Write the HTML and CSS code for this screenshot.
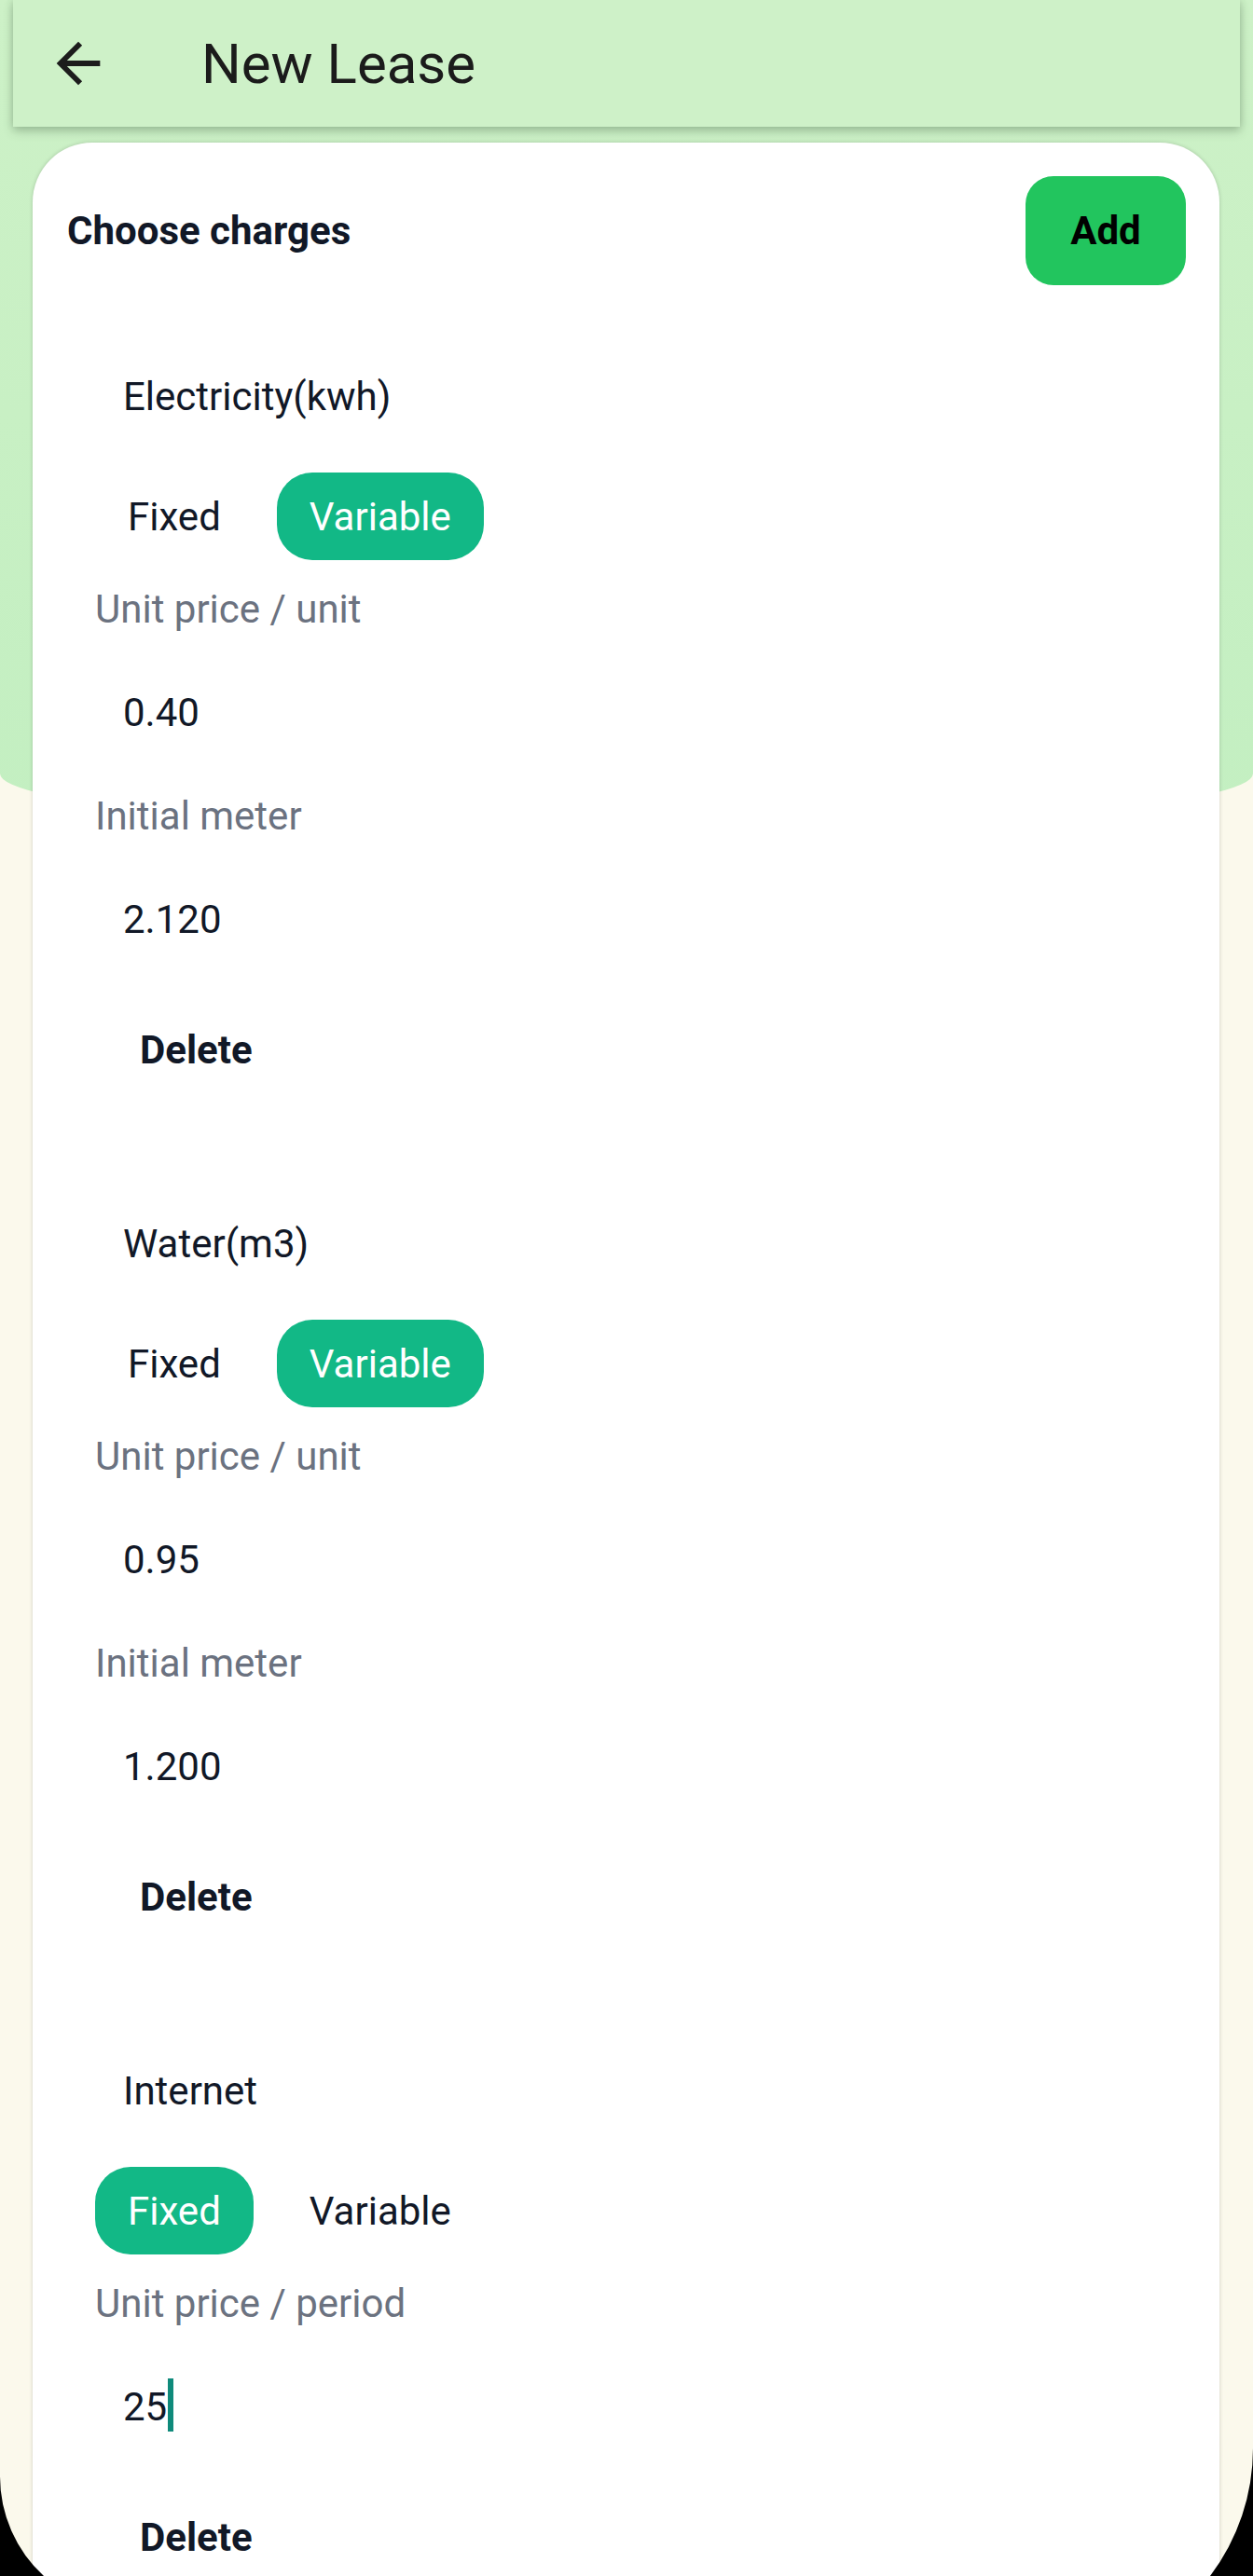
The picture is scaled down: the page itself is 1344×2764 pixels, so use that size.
FILE: index.html
```html
<!DOCTYPE html>
<html lang="en">
<head>
<meta charset="utf-8">
<title>New Lease</title>
<link rel="stylesheet" href="styles.css">
</head>
<body>
<div class="screen">
  <header class="appbar">
    <button class="back" aria-label="Back">
      <svg viewBox="0 0 24 24" width="70" height="70"><path d="M20 11H7.83l5.59-5.59L12 4l-8 8 8 8 1.41-1.41L7.83 13H20v-2z" fill="#1c1c1c"/></svg>
    </button>
    <h1 class="appbar-title">New Lease</h1>
  </header>

  <main class="card">
    <div class="card-head">
      <h2 class="card-title">Choose charges</h2>
      <button class="add-btn">Add</button>
    </div>

    <section class="charge first">
      <div class="title-row">Electricity(kwh)</div>
      <div class="toggle-row">
        <span class="toggle">Fixed</span>
        <span class="toggle active">Variable</span>
      </div>
      <div class="field-label">Unit price / unit</div>
      <div class="field-value">0.40</div>
      <div class="field-label next">Initial meter</div>
      <div class="field-value">2.120</div>
      <div class="delete-row">Delete</div>
    </section>

    <section class="charge">
      <div class="title-row">Water(m3)</div>
      <div class="toggle-row">
        <span class="toggle">Fixed</span>
        <span class="toggle active">Variable</span>
      </div>
      <div class="field-label">Unit price / unit</div>
      <div class="field-value">0.95</div>
      <div class="field-label next">Initial meter</div>
      <div class="field-value">1.200</div>
      <div class="delete-row">Delete</div>
    </section>

    <section class="charge">
      <div class="title-row">Internet</div>
      <div class="toggle-row">
        <span class="toggle active">Fixed</span>
        <span class="toggle">Variable</span>
      </div>
      <div class="field-label">Unit price / period</div>
      <div class="field-value">25<span class="caret"></span></div>
      <div class="delete-row">Delete</div>
    </section>
  </main>

  <svg class="corners" viewBox="0 0 1344 2764" width="1344" height="2764">
    <path d="M0 2657 A145 145 0 0 0 47 2764 L0 2764 Z" fill="#000"/>
    <path d="M1344 2627 A227 227 0 0 1 1298 2764 L1344 2764 Z" fill="#000"/>
  </svg>
</div>
</body>
</html>
```
FILE: styles.css
```css
* { box-sizing: border-box; }
html, body { margin: 0; padding: 0; }
body {
  width: 1344px;
  height: 2764px;
  overflow: hidden;
  font-family: Roboto, "Noto Sans", "Liberation Sans", sans-serif;
  background: #fbf9ec;
}
.screen {
  position: relative;
  width: 1344px;
  height: 2764px;
  overflow: hidden;
  background: #fbf9ec;
}
.screen::before {
  content: "";
  position: absolute;
  left: 0;
  top: 0;
  width: 1344px;
  height: 890px;
  background: linear-gradient(180deg, #cdf1c7 0%, #c3efc1 100%);
  border-radius: 0 0 50% 50% / 0 0 60px 60px;
  z-index: 0;
}
.appbar {
  position: relative;
  z-index: 2;
  margin: 0 14px;
  height: 136px;
  background: #cef1c8;
  display: flex;
  align-items: center;
  box-shadow: 0 5px 10px rgba(60, 90, 60, 0.28), 0 0 8px rgba(60, 90, 60, 0.2);
}
.back {
  border: 0;
  background: none;
  padding: 0;
  margin-left: 35px;
  width: 70px;
  height: 70px;
  display: flex;
}
.appbar-title {
  margin: 0 0 0 97px;
  font-size: 60px;
  font-weight: 400;
  color: #1b1b1b;
  letter-spacing: 0;
}
.card {
  position: relative;
  z-index: 1;
  margin: 17px 0 0 35px;
  width: 1273px;
  height: 2700px;
  background: #fff;
  border-radius: 64px 64px 0 0;
  box-shadow: 0 0 4px rgba(0, 0, 0, 0.18);
  padding: 36px 36px 0 37px;
  color: #111827;
}
.card-head {
  display: flex;
  justify-content: space-between;
  align-items: center;
  height: 117px;
}
.card-title {
  margin: 0;
  font-size: 42px;
  font-weight: 700;
  color: #111827;
}
.add-btn {
  width: 172px;
  height: 117px;
  border: 0;
  border-radius: 30px;
  background: #22c55e;
  color: #000;
  font-family: inherit;
  font-size: 42px;
  font-weight: 700;
}
.charge {
  padding-left: 30px;
  margin-top: 108px;
  font-size: 42px;
}
.charge.first { margin-top: 69px; }
.title-row {
  height: 100px;
  display: flex;
  align-items: center;
  padding-left: 30px;
  color: #111827;
}
.toggle-row {
  margin-top: 32px;
  height: 94px;
  display: flex;
  gap: 25px;
}
.toggle {
  height: 94px;
  display: flex;
  align-items: center;
  padding: 0 35px;
  border-radius: 38px;
  color: #111827;
}
.toggle.active {
  background: #12b886;
  color: #fff;
}
.field-label {
  margin-top: 22px;
  height: 60px;
  display: flex;
  align-items: center;
  color: #6b7280;
}
.field-label.next { margin-top: 31px; }
.field-value {
  margin-top: 31px;
  height: 100px;
  display: flex;
  align-items: center;
  padding-left: 30px;
  color: #111827;
}
.caret {
  display: inline-block;
  width: 6px;
  height: 57px;
  background: #0f8a7b;
  margin-left: 1px;
  margin-top: -4px;
}
.delete-row {
  margin-top: 40px;
  height: 100px;
  display: flex;
  align-items: center;
  padding-left: 48px;
  font-weight: 700;
  color: #111827;
}
.corners {
  position: absolute;
  left: 0;
  top: 0;
  z-index: 5;
  pointer-events: none;
}
```
